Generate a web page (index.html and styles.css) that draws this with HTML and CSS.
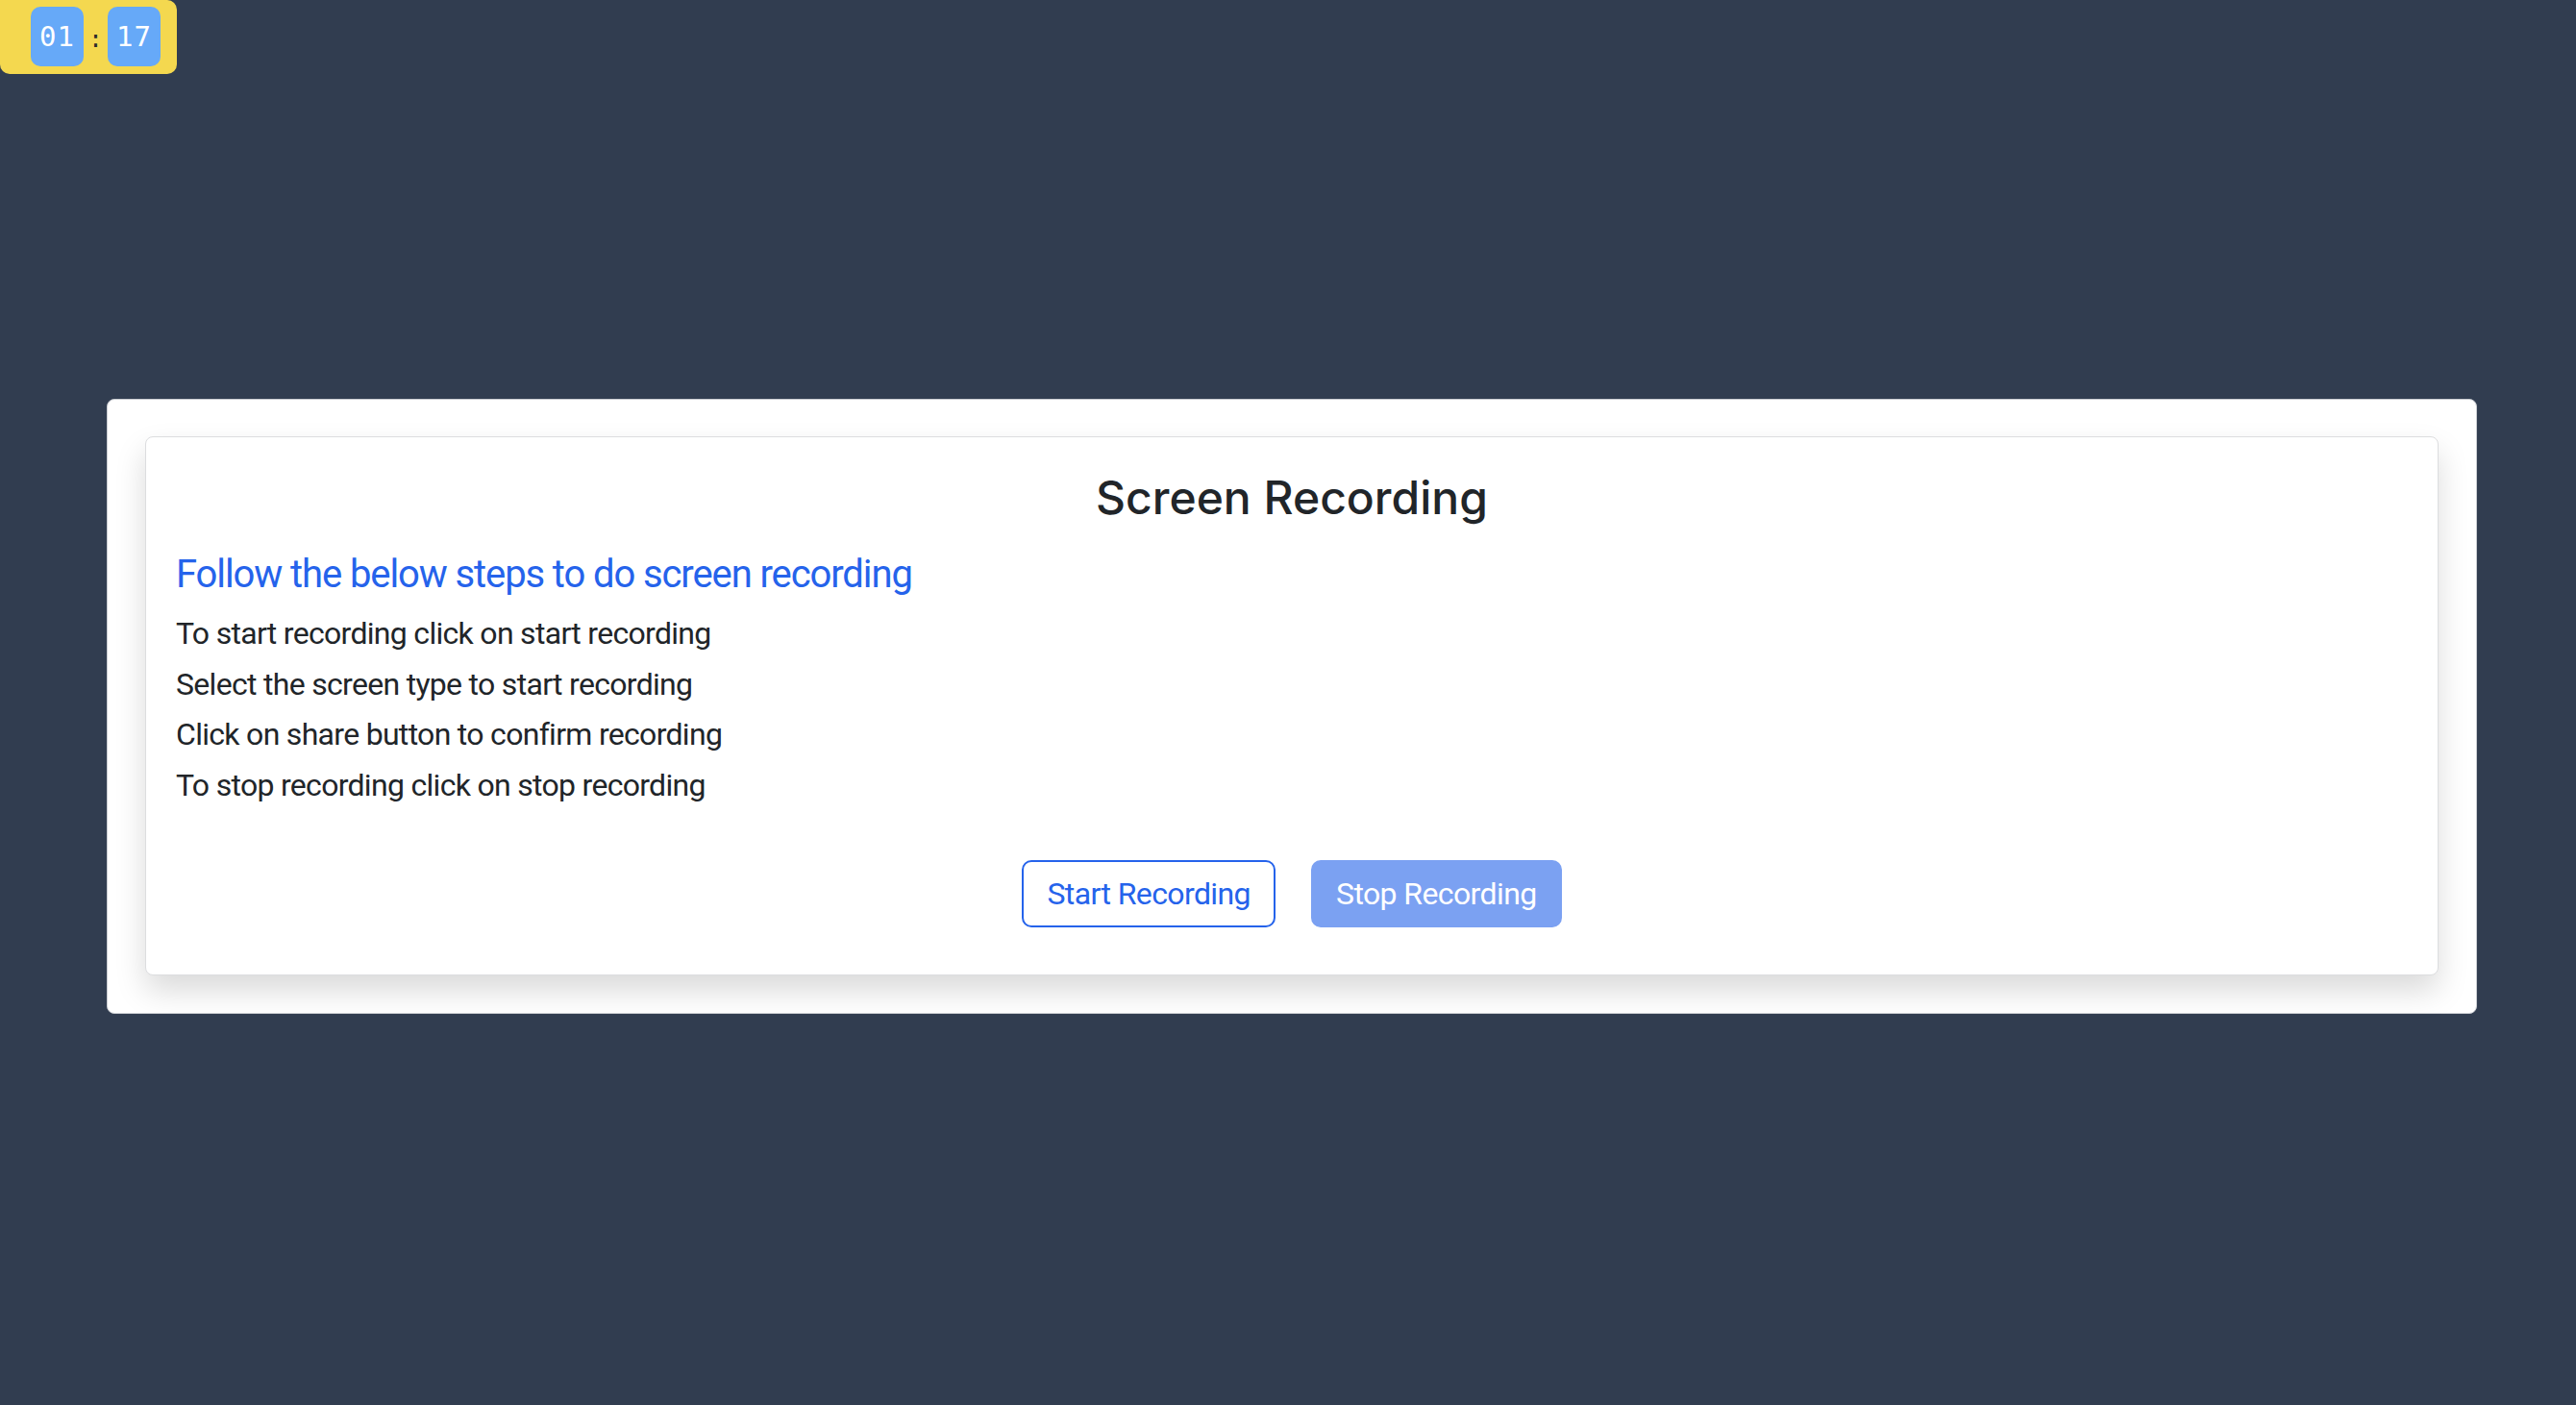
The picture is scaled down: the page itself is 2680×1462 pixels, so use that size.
FILE: index.html
```html
<!DOCTYPE html>
<html lang="en">
<head>
<meta charset="utf-8">
<title>Screen Recording</title>
<link rel="stylesheet" href="styles.css">
</head>
<body>
<div class="timer">
  <span class="digit">01</span>
  <span class="colon">:</span>
  <span class="digit">17</span>
</div>
<main class="page">
  <section class="outer">
    <div class="card">
      <h1 class="title">Screen Recording</h1>
      <h2 class="subtitle">Follow the below steps to do screen recording</h2>
      <ul class="steps">
        <li>To start recording click on start recording</li>
        <li>Select the screen type to start recording</li>
        <li>Click on share button to confirm recording</li>
        <li>To stop recording click on stop recording</li>
      </ul>
      <div class="actions">
        <button class="btn btn-outline" type="button">Start Recording</button>
        <button class="btn btn-solid" type="button" disabled>Stop Recording</button>
      </div>
    </div>
  </section>
</main>
</body>
</html>
```
FILE: styles.css
```css
html, body {
  margin: 0;
  padding: 0;
}
body {
  background: #313d50;
  font-family: Roboto, Inter, "Liberation Sans", sans-serif;
  min-height: 1462px;
  color: #212529;
}
.timer {
  position: absolute;
  top: 0;
  left: 0;
  box-sizing: border-box;
  width: 184px;
  height: 77px;
  padding: 7px 17px 8px 32px;
  background: #f4d84f;
  border-radius: 0 10px 10px 10px;
  display: flex;
  align-items: center;
}
.digit {
  width: 55px;
  height: 62px;
  box-sizing: border-box;
  background: #66a9f8;
  border-radius: 10px;
  color: #ffffff;
  font-family: "DejaVu Sans Mono", "Liberation Mono", monospace;
  font-size: 29px;
  letter-spacing: 1px;
  display: flex;
  align-items: center;
  justify-content: center;
}
.colon {
  width: 25px;
  padding-top: 6px;
  text-align: center;
  font-family: "DejaVu Sans Mono", monospace;
  font-size: 24px;
  color: #2b2b2b;
  line-height: 1;
}
.page {
  padding: 415px 103px 0 111px;
}
.outer {
  background: #ffffff;
  border: 1px solid #c9ccd1;
  border-radius: 8px;
  padding: 38px 39px 39px 39px;
}
.card {
  background: #ffffff;
  border: 1px solid #dcdddf;
  border-radius: 8px;
  box-shadow: 0 16px 32px rgba(0, 0, 0, 0.15);
  padding: 34px 31px 49px 31px;
}
.title {
  margin: 0;
  font-family: Inter, Roboto, sans-serif;
  font-size: 48px;
  line-height: 58px;
  font-weight: 500;
  text-align: center;
  color: #212529;
}
.subtitle {
  margin: 27px 0 0 0;
  font-size: 40px;
  line-height: 48px;
  font-weight: 400;
  letter-spacing: -1.1px;
  color: #2563eb;
}
.steps {
  list-style: none;
  margin: 11px 0 0 0;
  padding: 0;
  font-size: 32px;
  line-height: 52.5px;
  letter-spacing: -0.7px;
  color: #212529;
}
.actions {
  margin-top: 52px;
  display: flex;
  justify-content: center;
  gap: 37px;
}
.btn {
  font-family: inherit;
  font-size: 32px;
  height: 70px;
  padding: 0 24px;
  border-radius: 10px;
  border: 2px solid #2563eb;
  line-height: 1;
  letter-spacing: -0.6px;
}
.btn-outline {
  background: #ffffff;
  color: #2563eb;
}
.btn-solid {
  background: #2563eb;
  color: #ffffff;
  opacity: 0.6;
}
```
